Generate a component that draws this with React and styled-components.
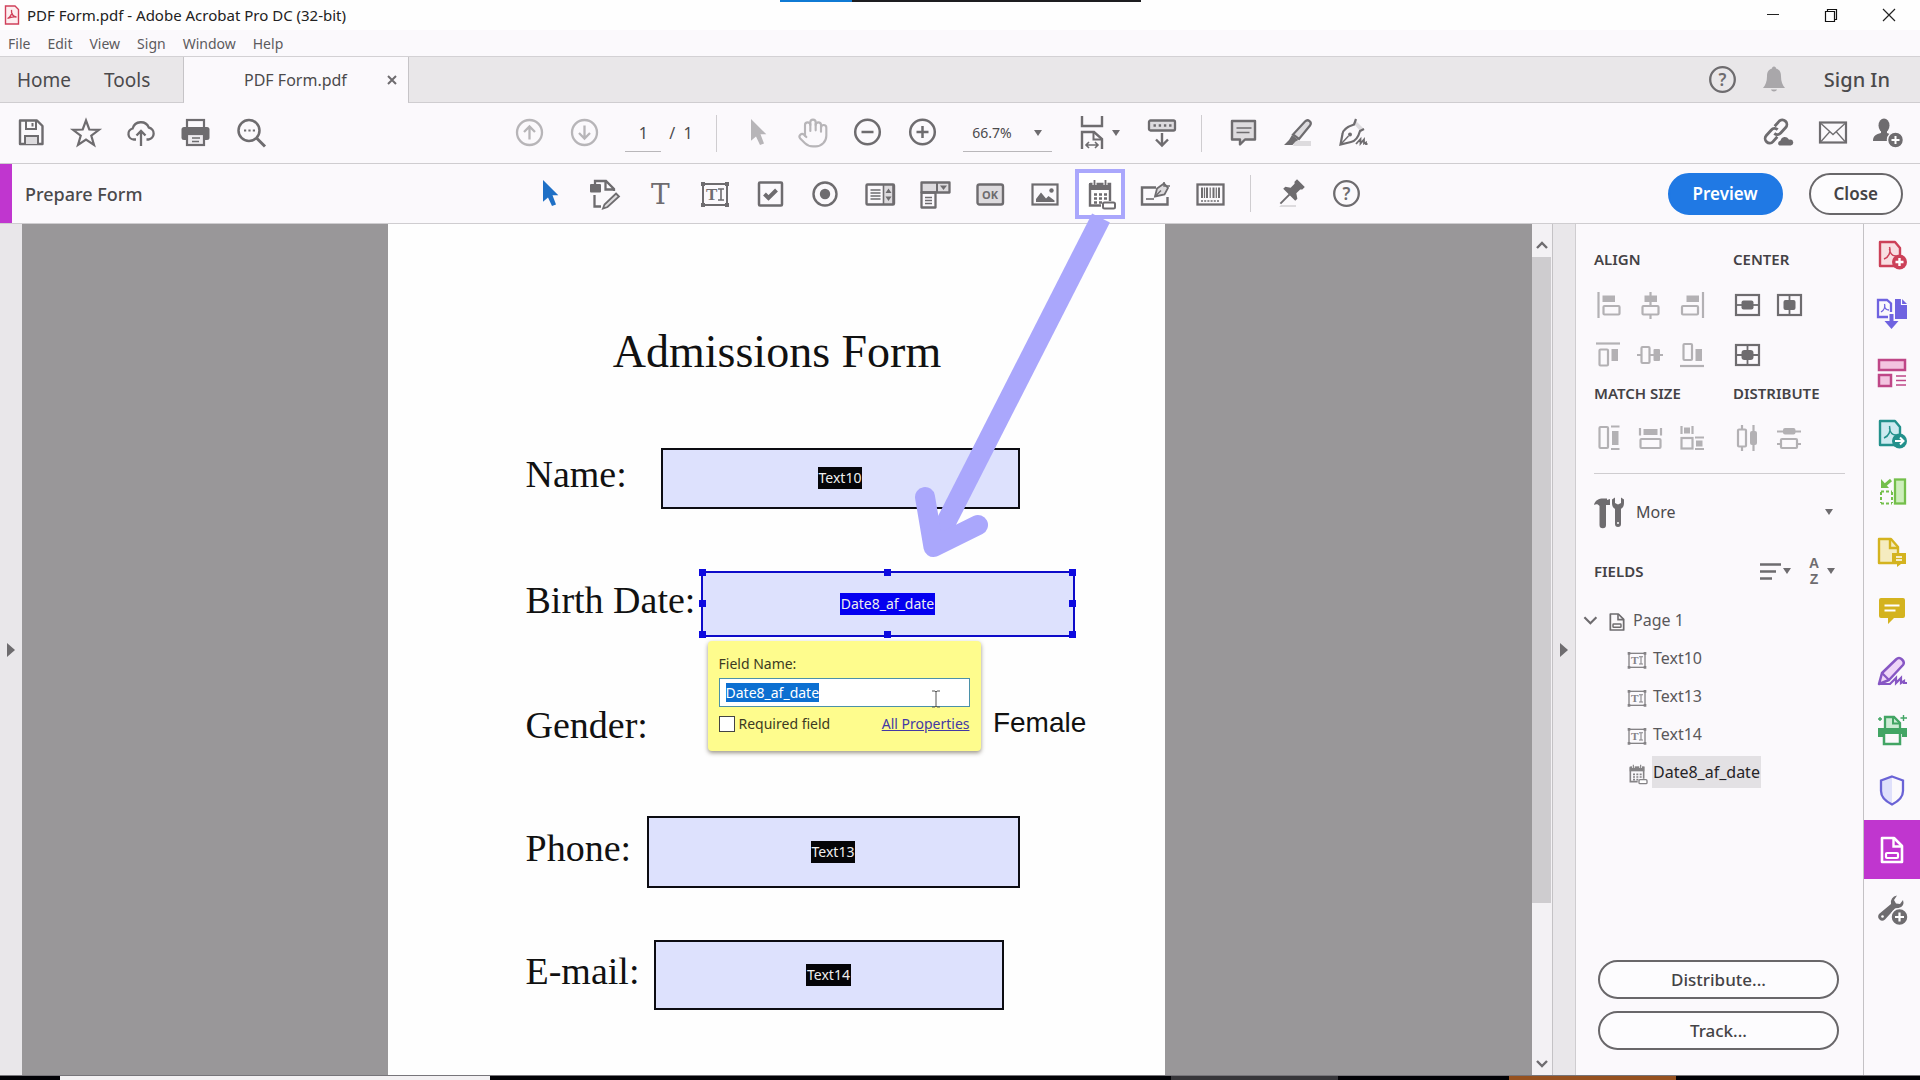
import React, { useEffect, useRef } from "react";
import styled, { createGlobalStyle, css } from "styled-components";
import { Hand } from "lucide-react";

const GlobalStyle = createGlobalStyle`
  * {
    box-sizing: border-box;
  }
  body {
    margin: 0;
    font-family: "Noto Sans", "Open Sans", sans-serif;
    font-size: 16px;
    color: #4b4a4c;
    background: #fbf9fc;
  }
  button, input, select {
    font-family: inherit;
    color: inherit;
    margin: 0;
  }
`;

const GREY = "#6e6c6f";
const LIGHT = "#dddbde";

/* ---------- icons ---------- */

const textFieldShape = (
  <>
    <rect x="3" y="5" width="24" height="21" strokeWidth="2" />
    <path
      d="M1 3h4v4H1zM25 3h4v4h-4zM1 24h4v4H1zM25 24h4v4h-4z"
      fill="currentColor"
      stroke="none"
    />
    <text
      x="6"
      y="21"
      fontSize="17"
      fontWeight="700"
      fontFamily="Liberation Serif, serif"
      fill="currentColor"
      stroke="none"
    >
      T
    </text>
    <path d="M18 10h6M21 10v11M18 21h6" strokeWidth="1.6" />
  </>
);

const calendarShape = (
  <>
    <path d="M5 5H25V22M5 5V26.5H16" strokeWidth="2.4" />
    <path d="M4 4H26V11H4Z" fill="currentColor" stroke="none" />
    <path d="M9.5 1V6M20.5 1V6" stroke="#fff" strokeWidth="4" />
    <path d="M9.5 1V6M20.5 1V6" strokeWidth="1.8" />
    <path d="M9 15.5h13M9 19.5h13M9 23.5h8" strokeWidth="2.6" strokeDasharray="3 2" />
    <rect x="18" y="23.5" width="12" height="6" rx="1.5" fill="#fff" strokeWidth="2" />
  </>
);

const formPageShape = (
  <>
    <path d="M5 3H17L25 11V27H5Z" strokeWidth="2.6" strokeLinejoin="round" />
    <path d="M16.5 3V11.5H25" strokeWidth="2.4" />
    <rect x="9" y="18" width="12" height="5" rx="1" strokeWidth="2.2" />
  </>
);

const acrobatPage = fill => (
  <>
    <path d="M3 3H18L23 9V27H3Z" fill={fill} strokeWidth="2.4" strokeLinejoin="round" />
    <path d="M7 20C12 18 14 13 12.5 8M12.5 10C13 14 15 17 19 17" strokeWidth="1.5" />
  </>
);

const icons = {
  save: (
    <>
      <path d="M4 2.5H21L26.5 8V26H4Z" strokeWidth="2.4" strokeLinejoin="round" />
      <path d="M10 3V11H20V3M16.5 5V8.5" strokeWidth="2" />
      <path d="M9 26V18H22V26" fill={LIGHT} strokeWidth="2" />
    </>
  ),
  star: (
    <path
      d="M15 2.5L18.3 11.5 28 11.8 20.3 17.7 23 27 15 21.6 7 27 9.7 17.7 2 11.8 11.7 11.5Z"
      strokeWidth="2.2"
    />
  ),
  upload: (
    <path
      d="M10 21.5H7.8A5.6 5.6 0 0 1 6.6 10.5 8.6 8.6 0 0 1 22.8 9.5 6.1 6.1 0 0 1 22.5 21.5H20.5M15 28V13M10.5 17.5L15 13l4.5 4.5"
      strokeWidth="2.3"
    />
  ),
  print: (
    <>
      <rect x="6" y="2" width="17" height="10" strokeWidth="2.2" />
      <rect x="0.5" y="9" width="28" height="13" rx="2.5" fill="currentColor" stroke="none" />
      <rect x="6" y="16" width="17" height="11" fill="#eeecef" strokeWidth="2.2" />
      <path d="M11 20h8M11 23.5h7" strokeWidth="1.3" />
    </>
  ),
  search: (
    <>
      <circle cx="13" cy="12.5" r="10.5" strokeWidth="2.5" />
      <path d="M20.5 20L29 28.5" strokeWidth="3" />
      <path d="M8 12.5h11" strokeWidth="2" strokeDasharray="2.2 2.2" />
    </>
  ),
  up: (
    <>
      <circle cx="15.5" cy="14.5" r="12.5" strokeWidth="2.3" />
      <path d="M15.5 21.5V8.5M10 14L15.5 8.5l5.5 5.5" strokeWidth="2.3" />
    </>
  ),
  down: (
    <>
      <circle cx="15.5" cy="14.5" r="12.5" strokeWidth="2.3" />
      <path d="M15.5 7.5V20.5M10 15L15.5 20.5l5.5-5.5" strokeWidth="2.3" />
    </>
  ),
  cursor: (
    <path
      d="M8 1L23.3 16.3H17.5L21 25.5 17 27 13 18.5 8 22.7Z"
      fill="currentColor"
      stroke="none"
    />
  ),
  minus: (
    <>
      <circle cx="14.5" cy="14" r="12.3" strokeWidth="2.5" />
      <path d="M8.5 14h12" strokeWidth="2.5" />
    </>
  ),
  plus: (
    <>
      <circle cx="14.5" cy="14" r="12.3" strokeWidth="2.5" />
      <path d="M8.5 14h12M14.5 8v12" strokeWidth="2.5" />
    </>
  ),
  fit: (
    <>
      <path d="M5 -2V8H25V-2M5 31V14H17L25 21V31" strokeWidth="2.4" />
      <path d="M16.5 14V21.5H25" strokeWidth="2" />
      <path d="M9 27H21M12 24l-3 3 3 3M18 24l3 3-3 3" strokeWidth="1.6" />
    </>
  ),
  scroll: (
    <>
      <rect x="3" y="2.5" width="26" height="10" rx="1.5" fill={LIGHT} strokeWidth="2.3" />
      <path d="M7.5 7.5h18" strokeWidth="2.4" strokeDasharray="2.4 2.8" />
      <path d="M16 15V27M10 21.5l6 6 6-6" strokeWidth="2.4" />
    </>
  ),
  comment: (
    <>
      <path
        d="M4 3H27V21.5H17L12 26.5V21.5H4Z"
        fill={LIGHT}
        strokeWidth="2.4"
        strokeLinejoin="round"
      />
      <path d="M8.5 10h15M8.5 14.5h13" strokeWidth="1.5" />
    </>
  ),
  highlight: (
    <>
      <path d="M12 23H28V28H10Z" fill={LIGHT} stroke="none" />
      <path
        d="M22 3.5C25 .5 29.5 4 27 7.5L16 21 10 16.5Z"
        fill={LIGHT}
        strokeWidth="2.2"
      />
      <path d="M9 17l6.5 5-3 1.5-3 3.5H1l5-5z" fill="currentColor" stroke="none" />
    </>
  ),
  sign: (
    <>
      <path d="M18 3L26 11 23 14 16 6Z" fill={LIGHT} stroke="none" />
      <path
        d="M18 1L16 6.5C10 8.5 5 11 4.5 16L2.5 26.5 13 24C18 23 20.5 18.5 22 13L26 11"
        strokeWidth="2.2"
      />
      <path d="M3 26L10.5 18" strokeWidth="1.5" />
      <circle cx="12" cy="16.5" r="2" fill="currentColor" stroke="none" />
      <path d="M18 26l4.5-5v4.5l3.5-4v4l2-1v1.5h1.5" strokeWidth="1.8" />
    </>
  ),
  link: (
    <>
      <g transform="translate(13 13.5) rotate(-48)" strokeWidth="2.8">
        <path d="M-3 4.5H-9.5A4.5 4.5 0 0 1 -9.5 -4.5H-2A4.5 4.5 0 0 1 2.5 0" />
        <path d="M3 -4.5H9.5A4.5 4.5 0 0 1 9.5 4.5H2A4.5 4.5 0 0 1 -2.5 0" />
      </g>
      <path
        d="M16 28.5a3.5 3.5 0 0 1 .5-6.5 5.5 5.5 0 0 1 10-1.5 4 4 0 0 1 1.5 8z"
        fill="currentColor"
        stroke="#fbf9fc"
      />
    </>
  ),
  mail: (
    <>
      <rect x="2" y="4.5" width="26" height="20" strokeWidth="2.2" />
      <path d="M3 5.5L15 16.5 27 5.5M3 23.5L11.5 14M27 23.5L18.5 14" strokeWidth="1.3" />
    </>
  ),
  person: (
    <>
      <ellipse cx="11" cy="7.5" rx="5.5" ry="7" fill="currentColor" stroke="none" />
      <path d="M8 12h6v3c4 1 6 3 6 8H0c0-5 3-7 8-8z" fill="currentColor" stroke="none" />
      <circle cx="22.5" cy="22" r="8" fill="currentColor" stroke="#fbf9fc" strokeWidth="1.5" />
      <path d="M18.5 22h8M22.5 18v8" stroke="#fff" strokeWidth="2" />
    </>
  ),
  editPage: (
    <>
      <rect x="0" y="5" width="11" height="8.5" rx="1" fill="currentColor" stroke="none" />
      <path d="M5 6V2H16L24 10V12M15.5 2V10.5H24M4.5 16V27.5H11" strokeWidth="2.3" />
      <path d="M26 14.5l3 3L17.5 28 13 29.5 14.5 25.5Z" fill={LIGHT} strokeWidth="1.8" />
    </>
  ),
  text: (
    <text x="6" y="25" fontSize="28" fontFamily="DejaVu Serif, serif" fill="currentColor" stroke="none">
      T
    </text>
  ),
  textField: textFieldShape,
  checkBox: (
    <>
      <rect x="4" y="3.5" width="23" height="23" rx="1" strokeWidth="2.5" />
      <path d="M9.5 15l4 4 8-8" strokeWidth="4" />
    </>
  ),
  radio: (
    <>
      <circle cx="15" cy="15" r="11.5" strokeWidth="2.4" />
      <circle cx="15" cy="15" r="5.2" fill="currentColor" stroke="none" />
    </>
  ),
  list: (
    <>
      <rect x="1.5" y="5.5" width="27.5" height="20" rx="1" strokeWidth="2.4" />
      <path d="M18.5 6H28V25H18.5Z" fill={LIGHT} strokeWidth="1.6" />
      <path d="M5.5 11h10M5.5 14h10M5.5 17h10M5.5 20h10" strokeWidth="1.4" />
      <path d="M20.5 14l3-4.5 3 4.5zM20.5 17.5l3 4.5 3-4.5z" fill="currentColor" stroke="none" />
    </>
  ),
  dropdown: (
    <>
      <path d="M1.5 3.5H29.5V13.5H1.5Z" fill={LIGHT} strokeWidth="2.3" strokeLinejoin="round" />
      <path d="M17 3.5v10" strokeWidth="2" />
      <path d="M20 6.5h7l-3.5 4.5z" fill="currentColor" stroke="none" />
      <path d="M1.5 13.5H15.5V28.5H1.5Z" strokeWidth="2.3" strokeLinejoin="round" />
      <path d="M5 18.5h7M5 21.5h7M5 24.5h7" strokeWidth="1.4" />
    </>
  ),
  ok: (
    <>
      <rect x="2.5" y="5.5" width="25.5" height="20" rx="2" fill={LIGHT} strokeWidth="2.4" />
      <text x="15" y="20" fontSize="11" fontWeight="700" textAnchor="middle" fill="currentColor" stroke="none">
        OK
      </text>
    </>
  ),
  image: (
    <>
      <rect x="2.5" y="5.5" width="25" height="20" strokeWidth="2.2" />
      <path d="M6 23V20l5-6.5 5 6 2.5-2.5 6 4.5V23Z" fill="currentColor" stroke="none" />
      <circle cx="21.5" cy="11.5" r="2.2" fill="currentColor" stroke="none" />
    </>
  ),
  date: calendarShape,
  signField: (
    <>
      <path d="M16 8.5H2V25.5H27.5V18" strokeWidth="2.4" />
      <path d="M6 20h8" strokeWidth="1.6" />
      <path d="M15 17.5L17 9.5 24 4.5 28 9 24.5 15.5Z" fill={LIGHT} strokeWidth="1.8" />
      <path d="M24 3v4h6M15 17.5l6-6" strokeWidth="1.5" />
    </>
  ),
  barcode: (
    <>
      <rect x="2.5" y="5.5" width="26" height="20" strokeWidth="2.3" />
      <path d="M7 8.5V19M12 8.5V19M18.5 8.5V19M24 8.5V19" strokeWidth="2" />
      <path d="M9.5 8.5V19M15.2 8.5V19M21.3 8.5V19" strokeWidth="1.2" />
      <path d="M6 22h19" strokeWidth="1.6" strokeDasharray="2 1.2" />
    </>
  ),
  pin: (
    <>
      <path d="M4 26h15v2H2z" fill={LIGHT} stroke="none" />
      <g transform="rotate(45 14 14)">
        <path
          d="M8.5 0H19.5V3.5L18 5V10.5L22.5 13.5V16.5H5.5V13.5L10 10.5V5L8.5 3.5Z"
          fill="currentColor"
          stroke="none"
        />
        <path d="M14 16V29" strokeWidth="2" />
      </g>
    </>
  ),
  help: (
    <>
      <circle cx="14.5" cy="14.5" r="12.3" strokeWidth="2.3" />
      <text x="14.5" y="20.5" fontSize="17" fontWeight="600" textAnchor="middle" fill="currentColor" stroke="none">
        ?
      </text>
    </>
  ),
  bell: (
    <path
      d="M15 1.5c1.5 0 2 1 2 2 4 1.2 5 4 5 8 0 5 1.5 8.5 4 11.5H4C6.5 20 8 16.5 8 11.5c0-4 1-6.8 5-8 0-1 .5-2 2-2zM12 24.5h6c-.5 2.5-5.5 2.5-6 0z"
      fill="currentColor"
      stroke="none"
    />
  ),
  tools: (
    <>
      <path
        d="M0 8C1 3 5 1.5 9 1.5H13V3L16 2V8H12V28A2 2 0 0 1 5.5 28V9C4 7 2 7 0 8Z"
        fill="currentColor"
        stroke="none"
      />
      <path
        d="M18 2.5V6c0 4 2 5 3 6v15a2.5 2.5 0 0 0 6 0V12c1-1 3-2 3-6V2.5L27 .5V6l-3 1.5L21 6V.5z"
        fill="currentColor"
        stroke="none"
      />
      <circle cx="24" cy="26" r="1" fill="#fff" stroke="none" />
    </>
  ),
  sort: <path d="M8 8.5H29M8 15.5H24M8 22.5H20" strokeWidth="2.6" />,
  az: (
    <g
      fill="currentColor"
      stroke="none"
      fontFamily="Liberation Sans, sans-serif"
      fontSize="14"
      fontWeight="700"
      textAnchor="middle"
    >
      <text x="18" y="12">A</text>
      <text x="18" y="28">Z</text>
    </g>
  ),
  chevron: <path d="M4 10.5L14 20.5 24 10.5" strokeWidth="3.6" />
};

// Alignment glyphs share a 28px box
const alignIcons = {
  left: (
    <>
      <path d="M4.5 1V27" />
      <rect x="8.5" y="4.5" width="12.5" height="6.5" fill="currentColor" stroke="none" />
      <rect x="9.5" y="15" width="16" height="8.5" rx="1" />
    </>
  ),
  middle: (
    <>
      <path d="M14.5 1V15M14.5 24V28" />
      <rect x="8.5" y="4.5" width="12.5" height="6.5" fill="currentColor" stroke="none" />
      <rect x="6.5" y="15" width="16" height="8.5" rx="1" />
    </>
  ),
  right: (
    <>
      <path d="M25 1V27" />
      <rect x="8.5" y="4.5" width="12.5" height="6.5" fill="currentColor" stroke="none" />
      <rect x="4" y="15" width="16" height="8.5" rx="1" />
    </>
  ),
  top: (
    <>
      <path d="M2 2.5H26" />
      <rect x="5.5" y="8.5" width="8.5" height="16" rx="1" />
      <rect x="17.5" y="8" width="6.5" height="12" fill="currentColor" stroke="none" />
    </>
  ),
  center: (
    <>
      <path d="M1 14H5M13 14H27" />
      <rect x="5.5" y="6" width="8" height="16" rx="1" />
      <rect x="17.5" y="8" width="6.5" height="12" rx="1" fill="currentColor" stroke="none" />
    </>
  ),
  bottom: (
    <>
      <path d="M2 25H26" />
      <rect x="5.5" y="3" width="8.5" height="16" rx="1" />
      <rect x="17.5" y="8" width="6.5" height="12" fill="currentColor" stroke="none" />
    </>
  ),
  boxH: (
    <>
      <rect x="3" y="4" width="23" height="20" />
      <rect x="8.5" y="9.5" width="12" height="9" rx="2" fill="currentColor" stroke="none" />
      <path d="M3 14h23" strokeWidth="1.8" />
    </>
  ),
  boxV: (
    <>
      <rect x="3" y="4" width="23" height="20" />
      <rect x="8.5" y="9" width="12" height="10" rx="2" fill="currentColor" stroke="none" />
      <path d="M14.5 4v20" strokeWidth="1.8" />
    </>
  ),
  boxBoth: (
    <>
      <rect x="3" y="4" width="23" height="20" />
      <rect x="8.5" y="9" width="12" height="10" rx="3" fill="currentColor" stroke="none" />
      <path d="M3 14h23M14.5 4v20" strokeWidth="1.8" />
    </>
  ),
  matchHeight: (
    <>
      <rect x="5.5" y="3" width="8.5" height="21" rx="1" />
      <path d="M17 2.5H25.5M17 25H25.5" />
      <rect x="18" y="7" width="6.5" height="14" fill="currentColor" stroke="none" />
    </>
  ),
  matchWidth: (
    <>
      <path d="M4 4V11.5M25 4V11.5" />
      <rect x="7.5" y="5" width="14" height="6" fill="currentColor" stroke="none" />
      <rect x="4.5" y="15" width="20" height="9" rx="1" />
    </>
  ),
  matchBoth: (
    <>
      <path d="M3.5 2V10M14.5 2V10M17 13.5H26M17 25H26" />
      <rect x="6" y="3.5" width="6" height="6" fill="currentColor" stroke="none" />
      <rect x="3.5" y="14" width="11" height="10.5" />
      <rect x="18" y="16.5" width="6.5" height="6" fill="currentColor" stroke="none" />
    </>
  ),
  distributeH: (
    <>
      <path d="M9 1V5M9 23V27M20.5 1V27" />
      <rect x="5" y="5.5" width="8" height="17" rx="1" />
      <rect x="17" y="7" width="7" height="14" rx="2" fill="currentColor" stroke="none" />
    </>
  ),
  distributeV: (
    <>
      <path d="M2 7.5H26M2 20H6M22 20H26" />
      <rect x="8" y="4" width="12.5" height="6.5" rx="2" fill="currentColor" stroke="none" />
      <rect x="6" y="15" width="16" height="9" rx="1" />
    </>
  )
};

const stripIcons = {
  create: {
    color: "#cc4158",
    shape: (
      <>
        {acrobatPage("#f8dfe2")}
        <circle cx="22.5" cy="23" r="7.5" fill="currentColor" stroke="none" />
        <path d="M18.5 23h8M22.5 19v8" stroke="#fff" strokeWidth="2.4" />
      </>
    )
  },
  export: {
    color: "#6f63e0",
    shape: (
      <>
        <path d="M18 1H25L30 6V21H18Z" fill="currentColor" stroke="none" />
        <path d="M24.5 1V6.5H30" stroke="#fff" strokeWidth="1.2" />
        <path d="M1 2H10L14 5.5V19H1Z" strokeWidth="2.3" />
        <path d="M4 14C7 12 8.5 9 7.5 6M7.5 8C8 11 10 12 12 12" strokeWidth="1.3" />
        <path d="M14.5 14V24" stroke="#fbf9fc" strokeWidth="7" />
        <path d="M12.5 16h4v7h5l-7 8-7-8h5z" fill="currentColor" stroke="none" />
      </>
    )
  },
  organize: {
    color: "#bf4787",
    shape: (
      <>
        <rect x="2" y="2" width="26" height="10" fill="#f3c4e0" strokeWidth="2.5" />
        <rect x="2" y="17" width="12" height="11" fill="#f3c4e0" strokeWidth="2.5" />
        <path d="M19 18h10M19 22.5h10M19 27h10" strokeWidth="1.5" />
      </>
    )
  },
  send: {
    color: "#23918c",
    shape: (
      <>
        {acrobatPage("#cdeaf0")}
        <circle cx="22.5" cy="23" r="7.5" fill="currentColor" stroke="none" />
        <path d="M18 23h8M23 19.5l3.5 3.5-3.5 3.5" stroke="#fff" strokeWidth="2" />
      </>
    )
  },
  combine: {
    color: "#74bf4b",
    shape: (
      <>
        <rect x="18" y="2.5" width="10" height="24" fill="#cdeebb" strokeWidth="2.3" />
        <path d="M4 14.5H15M4 26.5H15M4 15V26M15 15V26" strokeWidth="2" strokeDasharray="3 2" />
        <path d="M14 3L7 9" strokeWidth="3" />
        <path d="M4 2V11H12Z" fill="currentColor" stroke="none" />
      </>
    )
  },
  review: {
    color: "#d4b31f",
    shape: (
      <>
        <path d="M2 2H14L21 10V26H2Z" fill="#f5ecc0" strokeWidth="2.4" strokeLinejoin="round" />
        <path d="M13 2V11H21" strokeWidth="2.4" />
        <path d="M15 16H29V27H24L20 30V27H15Z" fill="currentColor" stroke="none" />
        <path d="M19 20h6M19 23h6" stroke="#fff" strokeWidth="1.3" />
      </>
    )
  },
  comment: {
    color: "#d4b31f",
    shape: (
      <>
        <path d="M4 2H26Q28 2 28 4V20Q28 22 26 22H17L11 28V22H4Q2 22 2 20V4Q2 2 4 2Z" fill="currentColor" stroke="none" />
        <path d="M7.5 9.5h15M7.5 14.5h11" stroke="#fff" strokeWidth="2" />
      </>
    )
  },
  fill: {
    color: "#8757c4",
    shape: (
      <>
        <path
          d="M19 3.5Q22 .5 25 3.5T26 9L12 24 2 28 5 17Z"
          fill="#efd6f8"
          strokeWidth="2.5"
          strokeLinejoin="round"
        />
        <path d="M5 17L12 24M2 28H13L19 22V27L24 22V27L27 25V27H30" strokeWidth="2.2" />
      </>
    )
  },
  scan: {
    color: "#42a564",
    shape: (
      <>
        <path d="M8 13V2H17L23 8V13" fill="#ccecd5" strokeWidth="2.3" />
        <path d="M16 2V8.5H23" strokeWidth="2" />
        <path d="M1 13H30V22H25V19H6V22H1Z" fill="currentColor" stroke="none" />
        <path d="M7 18.5V29H23V18.5" strokeWidth="2.5" />
        <path d="M26.5 0V6M23.5 3H30M3 2V6M1 4H5" strokeWidth="1.4" />
      </>
    )
  },
  protect: {
    color: "#6a63d6",
    shape: (
      <>
        <path d="M15 1.5L4 5.5V16Q4 24 15 29.5Z" fill="#dfe0fb" stroke="none" />
        <path d="M15 1.5L26 5.5V16Q26 24 15 29.5 4 24 4 16V5.5Z" strokeWidth="2.3" />
      </>
    )
  },
  form: { color: "#ffffff", shape: formPageShape },
  more: {
    color: GREY,
    shape: (
      <>
        <path
          d="M20 1.5L17 6l2 3.5 4 .5 3-4Q28 12 22 14L18 14.5 8 25.5Q5 28 2.5 25.5T2 20L14 10Q13 3 20 1.5Z"
          fill="currentColor"
          stroke="none"
        />
        <circle cx="5.5" cy="22.5" r="1.3" fill="#fff" stroke="none" />
        <circle cx="22.5" cy="23" r="8.5" fill="currentColor" stroke="#fbf9fc" strokeWidth="1.5" />
        <path d="M18 23h9M22.5 18.5v9" stroke="#fff" strokeWidth="2.2" />
      </>
    )
  }
};

const Svg = styled.svg`
  display: block;
  flex: none;
  overflow: visible;
  color: ${({ $color }) => $color};
`;

const Icon = ({ shape, box = 30, size = box, color = GREY }) => (
  <Svg
    width={size}
    height={size}
    viewBox={`0 0 ${box} ${box}`}
    fill="none"
    stroke="currentColor"
    strokeWidth="2.2"
    $color={color}
    aria-hidden="true"
  >
    {shape}
  </Svg>
);

const Caret = () => (
  <Svg width="10" height="6" viewBox="0 0 10 6" $color={GREY} aria-hidden="true">
    <path d="M1 0h8L5 6z" fill="currentColor" />
  </Svg>
);

/* ---------- window chrome ---------- */

const Shell = styled.div`
  display: flex;
  flex-direction: column;
  min-height: 100vh;
  position: relative;
`;

const plainButton = css`
  border: 0;
  padding: 0;
  background: none;
  font-size: 16px;
`;

const ShareBar = styled.div`
  position: absolute;
  top: 0;
  left: 780px;
  width: 361px;
  height: 2px;
  background: linear-gradient(to right, #0f7ad4 20%, #1d1d20 20%);
`;

const TitleBar = styled.header`
  display: flex;
  align-items: center;
  gap: 7px;
  height: 30px;
  padding: 0 23px 0 4px;
  background: #fefefe;
  font-size: 15px;
  line-height: 20px;
  color: #222;
`;

const WindowButtons = styled.div`
  display: flex;
  gap: 42px;
  margin-left: auto;

  button {
    ${plainButton}
  }
`;

const MenuBar = styled.nav`
  display: flex;
  align-items: center;
  gap: 17px;
  height: 27px;
  padding: 0 8px;
  border-bottom: 1px solid #d3d1d4;
  background: #fbf9fc;

  button {
    ${plainButton}
    font-size: 14px;
    color: #5d5b5e;
  }
`;

const TabBar = styled.div`
  display: flex;
  height: 46px;
  background: #e9e7e9;
`;

const TabGroup = styled.div`
  display: flex;
  align-items: center;
  gap: 33px;
  width: 184px;
  padding-left: 17px;
  border-right: 1px solid #c6c4c7;
  border-bottom: 1px solid #cfcdd0;

  button {
    ${plainButton}
    font-size: 19px;
  }
`;

const DocTab = styled.div`
  display: flex;
  align-items: center;
  justify-content: space-between;
  width: 224px;
  padding: 0 11px 0 60px;
  background: #fbf9fc;

  button {
    ${plainButton}
  }
`;

const Account = styled.div`
  flex: 1;
  display: flex;
  align-items: center;
  justify-content: flex-end;
  padding-right: 30px;
  border-left: 1px solid #c6c4c7;
  border-bottom: 1px solid #cfcdd0;

  button {
    ${plainButton}
    margin-left: 21px;
  }
`;

const SignIn = styled.button`
  && {
    margin-left: 35px;
    font-size: 20px;
    font-weight: 500;
  }
`;

const Toolbar = styled.div`
  display: grid;
  grid-template-columns: ${({ $columns }) => $columns};
  align-items: center;
  height: ${({ $height }) => $height}px;
  border-bottom: 1px solid #cfcdd0;
  background: #fbf9fc;
`;

const ToolGroup = styled.div`
  display: flex;
  align-items: center;
  height: 100%;
  padding: ${({ $pad = "0" }) => $pad};
  justify-content: ${({ $end }) => ($end ? "flex-end" : "flex-start")};
`;

const ToolButton = styled.button`
  ${plainButton}
  display: flex;
  align-items: center;
  justify-content: center;
  width: 55px;
  height: 42px;
`;

const Divider = styled.span`
  width: 1px;
  height: 37px;
  margin: 0 13px;
  background: #cfcdd0;
`;

const PageInput = styled.input`
  width: 36px;
  height: 37px;
  margin-left: 14px;
  padding: 0;
  border: 0;
  border-bottom: 1px solid #b9b7ba;
  background: none;
  font-size: 16px;
  text-align: center;
`;

const PageCount = styled.span`
  width: 42px;
  padding-left: 8px;
  white-space: pre;
`;

const ZoomBox = styled.div`
  display: flex;
  align-items: center;
  width: 89px;
  height: 37px;
  margin: 0 13px;
  padding-right: 9px;
  border-bottom: 1px solid #b9b7ba;

  select {
    flex: 1;
    min-width: 0;
    padding: 0 0 0 9px;
    border: 0;
    appearance: none;
    background: none;
    font-size: 14px;
  }
`;

const FitButton = styled(ToolButton)`
  width: 68px;
  gap: 4px;
`;

const ModeTitle = styled.h1`
  display: flex;
  align-items: center;
  height: 100%;
  margin: 0;
  padding-left: 13px;
  border-left: 12px solid #c036cf;
  font-size: 18px;
  font-weight: 500;
`;

const Pill = styled.button`
  height: ${({ $height = 42 }) => $height}px;
  padding: 0 23px;
  border: 2px solid ${({ $primary }) => ($primary ? "#2079e4" : "#69676a")};
  border-radius: 21px;
  background: ${({ $primary }) => ($primary ? "#2079e4" : "#fdfcfe")};
  color: ${({ $primary }) => ($primary ? "#fff" : "#454346")};
  font-size: 17px;
  line-height: 22px;
  font-weight: ${({ $weight = 600 }) => $weight};
`;

const Actions = styled(ToolGroup)`
  gap: 26px;
`;

/* Framed tool with its pointer arrow */
const Callout = styled.div`
  position: relative;
  display: flex;
  justify-content: center;
  width: 50px;
  height: 50px;
  margin: 0 2px 0 3px;
  border: 4px solid #aaa7fc;
  background: #fff;
`;

const Arrow = styled.svg`
  position: absolute;
  left: -163px;
  top: -4px;
  z-index: 5;
  overflow: visible;
  pointer-events: none;
`;

/* ---------- document ---------- */

const Main = styled.main`
  flex: 1;
  display: flex;
`;

const Rail = styled.button`
  display: flex;
  align-items: center;
  justify-content: center;
  width: ${({ $width }) => $width}px;
  padding: 0;
  border: 0;
  border-right: ${({ $edge }) => ($edge ? "1px solid #cfcdd0" : "0")};
  background: #e9e7ea;
`;

const Canvas = styled.div`
  flex: 1;
  display: flex;
  justify-content: center;
  padding-right: 2px;
  background: #999799;
`;

const Sheet = styled.section`
  width: 777px;
  padding: 100px 0 24px 138px;
  background: #fefefe;
  font-family: "Liberation Serif", serif;
  color: #111;
`;

const FormTitle = styled.h2`
  margin: 0 136px 35px 0;
  font-size: 46px;
  line-height: 56px;
  font-weight: 400;
  text-align: center;
`;

const FormRow = styled.div`
  display: flex;
  align-items: center;
  height: ${({ $tall }) => ($tall ? 126 : 123)}px;

  > label,
  > span {
    padding-bottom: 8px;
    font-size: 38px;
    line-height: 44px;
    white-space: nowrap;
  }
`;

const FieldLabel = styled.label`
  width: ${({ $width }) => $width}px;
`;

const FieldBox = styled.div`
  position: relative;
  display: grid;
  place-items: center;
  width: ${({ $width }) => $width}px;
  height: ${({ $height }) => $height}px;
  border: 2px solid ${({ $selected }) => ($selected ? "#0d0ac9" : "#0c0c12")};
  background: #dde1fd;

  > input {
    grid-area: 1 / 1;
    width: 100%;
    height: 100%;
    border: 0;
    background: none;
  }
`;

const FieldTag = styled.span`
  grid-area: 1 / 1;
  padding: 0 1px;
  background: ${({ $selected }) => ($selected ? "#0500f0" : "#050508")};
  color: #eee;
  font: 14px/22px "Noto Sans", sans-serif;
`;

const Handle = styled.i`
  position: absolute;
  left: ${({ $x }) => $x};
  top: ${({ $y }) => $y};
  width: 7px;
  height: 7px;
  margin: -4px;
  background: #0d0ae0;
`;

const Popup = styled.div`
  position: absolute;
  left: 5px;
  top: 68px;
  z-index: 2;
  width: 273px;
  height: 110px;
  padding: 13px 11px;
  border-radius: 4px;
  background: #fefc8d;
  box-shadow: 0 2px 4px rgba(90, 80, 60, 0.6);
  font: 14px/20px "Noto Sans", sans-serif;
  color: #3c3a22;

  > label {
    display: block;
  }
`;

const NameInput = styled.input`
  display: block;
  width: 100%;
  height: 29px;
  margin-top: 4px;
  padding: 0 6px;
  border: 1px solid #4b91a8;
  outline: 0;
  background: #fff;
  font-size: 14px;

  &::selection {
    background: #0c6fd1;
    color: #fff;
  }
`;

const PopupRow = styled.div`
  display: flex;
  align-items: center;
  justify-content: space-between;
  margin-top: 7px;

  label {
    display: flex;
    align-items: center;
    gap: 4px;
  }

  input {
    appearance: none;
    width: 16px;
    height: 16px;
    border: 1px solid #444;
    background: #fff;
  }

  a {
    color: #4339a5;
  }
`;

const IBeam = styled.svg`
  position: absolute;
  left: 223px;
  top: 49px;
`;

const Option = styled.p`
  margin: 0 0 0 345px;
  padding-bottom: 12px;
  font: 28px/32px "Liberation Sans", sans-serif;
`;

const Scrollbar = styled.div`
  display: flex;
  flex-direction: column;
  align-items: stretch;
  width: 21px;
  padding-top: 10px;
  border-right: 1px solid #c4c2c5;
  background: #f3f1f4;

  button {
    ${plainButton}
    display: flex;
    align-items: center;
    justify-content: center;
    height: 23px;
  }

  button:last-child {
    margin-top: auto;
  }
`;

const Thumb = styled.div`
  height: 646px;
  margin-right: 1px;
  background: #cecccf;
`;

/* ---------- side panel ---------- */

const Panel = styled.aside`
  display: flex;
  flex-direction: column;
  width: 288px;
  padding: 23px 18px 25px;
  border-right: 1px solid #c4c2c5;
  background: #fbf9fc;
`;

const PanelGrid = styled.div`
  display: grid;
  grid-template-columns: 139px 1fr;
  padding-bottom: 21px;
  border-bottom: 1px solid #cfcdd0;
`;

const PanelHeading = styled.h3`
  margin: 0;
  font-size: 15px;
  line-height: 24px;
  font-weight: 600;
  color: #444245;
`;

const AlignGrid = styled.div`
  display: grid;
  grid-template-columns: repeat(${({ $columns }) => $columns}, 28px);
  grid-auto-rows: 28px;
  gap: 22px 14px;
  align-content: start;
  padding: ${({ $tight }) => ($tight ? "19px 0 0" : "20px 0 12px")};

  button {
    ${plainButton}
  }
`;

const MoreButton = styled.button`
  ${plainButton}
  display: flex;
  align-items: center;
  gap: 12px;
  margin-top: 20px;
  padding-right: 11px;
  height: 36px;

  svg:last-child {
    margin-left: auto;
  }
`;

const FieldsHead = styled.div`
  display: flex;
  align-items: center;
  gap: 4px;
  margin-top: 24px;
  padding-right: 9px;
  height: 34px;

  h3 {
    margin-right: auto;
  }

  button {
    ${plainButton}
    display: flex;
    align-items: center;
  }
`;

const Tree = styled.ul`
  flex: 1;
  margin: 13px 0 0;
  padding: 0;
  list-style: none;

  ul {
    margin: 0;
    padding: 0 0 0 33px;
    list-style: none;
  }
`;

const TreeItem = styled.button`
  ${plainButton}
  display: flex;
  align-items: center;
  gap: 5px;
  height: 38px;
  margin-left: ${({ $root }) => ($root ? "-12px" : "0")};
  color: ${({ $selected }) => ($selected ? "#262427" : "#5a585b")};

  > svg:nth-last-child(2) {
    margin-left: ${({ $root }) => ($root ? "2px" : "0")};
    margin-top: 4px;
  }

  span {
    padding: 0 1px;
    line-height: 32px;
    background: ${({ $selected }) => ($selected ? "#e3e1e4" : "none")};
  }
`;

const PanelActions = styled.div`
  display: grid;
  gap: 12px;
  padding: 0 6px 0 4px;
`;

const ToolStrip = styled.nav`
  display: flex;
  flex-direction: column;
  width: 56px;
  padding-bottom: 136px;
  background: #fbf9fc;
`;

const StripButton = styled.button`
  ${plainButton}
  flex: 1;
  display: flex;
  align-items: center;
  justify-content: center;
  background: ${({ $active }) => ($active ? "#c036cf" : "none")};
`;

const Taskbar = styled.footer`
  display: flex;
  height: 5px;
  border-top: 1px solid #77757a;
  background: #020206;
`;

const Segment = styled.span`
  width: ${({ $width }) => $width}%;
  background: ${({ $color }) => $color};
`;

/* ---------- data ---------- */

const menus = ["File", "Edit", "View", "Sign", "Window", "Help"];
const fileTools = ["save", "star", "upload", "print", "search"];
const formTools = [
  "editPage",
  "text",
  "textField",
  "checkBox",
  "radio",
  "list",
  "dropdown",
  "ok",
  "image"
];
const treeFields = [
  { name: "Text10", icon: textFieldShape },
  { name: "Text13", icon: textFieldShape },
  { name: "Text14", icon: textFieldShape },
  { name: "Date8_af_date", icon: calendarShape, selected: true }
];
const handles = [
  ["0%", "0%"],
  ["50%", "0%"],
  ["100%", "0%"],
  ["0%", "50%"],
  ["100%", "50%"],
  ["0%", "100%"],
  ["50%", "100%"],
  ["100%", "100%"]
];
const segments = [
  [3.1, "#020206"],
  [22.4, "#f3f1f3"],
  [35.5, "#020206"],
  [8.7, "#37363a"],
  [8.9, "#020206"],
  [8.7, "#96511f"]
];

const Tool = ({ name, color }) => (
  <ToolButton aria-label={name}>
    <Icon shape={icons[name]} color={color} />
  </ToolButton>
);

const AlignButtons = ({ names, color = "#b3b1b4", columns = 3, tight }) => (
  <AlignGrid $columns={columns} $tight={tight}>
    {names.map(name => (
      <button key={name} aria-label={name}>
        <Icon shape={alignIcons[name]} box={28} color={color} />
      </button>
    ))}
  </AlignGrid>
);

const FormField = ({ label, labelWidth, name, width, height, tall, selected, children }) => (
  <FormRow $tall={tall}>
    <FieldLabel htmlFor={name} $width={labelWidth}>
      {label}
    </FieldLabel>
    <FieldBox $width={width} $height={height} $selected={selected}>
      <input id={name} type="text" readOnly />
      <FieldTag $selected={selected}>{name}</FieldTag>
      {children}
    </FieldBox>
  </FormRow>
);

const FieldPopup = () => {
  const nameInput = useRef(null);

  useEffect(() => {
    nameInput.current.focus();
    nameInput.current.select();
  }, []);

  return (
    <Popup>
      <label htmlFor="field-name">Field Name:</label>
      <NameInput id="field-name" ref={nameInput} defaultValue="Date8_af_date" />
      <IBeam width="10" height="18" viewBox="0 0 10 18" fill="none" stroke="#555">
        <path d="M1 1h3l1 1 1-1h3M5 2v14M1 17h3l1-1 1 1h3" />
      </IBeam>
      <PopupRow>
        <label>
          <input type="checkbox" />
          Required field
        </label>
        <a href="#properties">All Properties</a>
      </PopupRow>
    </Popup>
  );
};

const App = () => (
  <Shell>
    <GlobalStyle />
    <ShareBar />
    <TitleBar>
      <Svg width="16" height="20" viewBox="0 0 16 20" fill="#fdeef0" stroke="currentColor" $color="#d0405a">
        <path d="M1.5 1H11l3.5 3.5V19h-13z" strokeWidth="1.4" />
        <path d="M3.5 13.5C6 12.5 8.5 9 7.5 5c-.5 4 2 7 5 7-3-.5-6 0-9 1.5z" strokeWidth="1.3" />
      </Svg>
      PDF Form.pdf - Adobe Acrobat Pro DC (32-bit)
      <WindowButtons>
        <button aria-label="Minimize">
          <Svg width="16" height="16" viewBox="0 0 16 16" fill="none" stroke="#222">
            <path d="M2 7.5h12" />
          </Svg>
        </button>
        <button aria-label="Restore">
          <Svg width="16" height="16" viewBox="0 0 16 16" fill="none" stroke="#111" strokeWidth="1.2">
            <path d="M2.5 4.5h9v10h-9zM4.5 4.5v-2h9v10h-2" />
          </Svg>
        </button>
        <button aria-label="Close window">
          <Svg width="16" height="16" viewBox="0 0 16 16" fill="none" stroke="#222" strokeWidth="1.2">
            <path d="M2 2l12 12M14 2L2 14" />
          </Svg>
        </button>
      </WindowButtons>
    </TitleBar>
    <MenuBar>
      {menus.map(menu => (
        <button key={menu}>{menu}</button>
      ))}
    </MenuBar>
    <TabBar>
      <TabGroup>
        <button>Home</button>
        <button>Tools</button>
      </TabGroup>
      <DocTab>
        PDF Form.pdf
        <button aria-label="Close tab">
          <Svg width="10" height="10" viewBox="0 0 10 10" stroke="currentColor" strokeWidth="2" $color={GREY}>
            <path d="M1 1l8 8M9 1L1 9" />
          </Svg>
        </button>
      </DocTab>
      <Account>
        <button aria-label="Help">
          <Icon shape={icons.help} />
        </button>
        <button aria-label="Notifications">
          <Icon shape={icons.bell} color="#a9a7aa" />
        </button>
        <SignIn>Sign In</SignIn>
      </Account>
    </TabBar>

    <Toolbar $columns="13fr auto 14fr" $height={61}>
      <ToolGroup $pad="0 0 0 3px">
        {fileTools.map(name => (
          <Tool key={name} name={name} />
        ))}
      </ToolGroup>
      <ToolGroup>
        <Tool name="up" color="#b7b5b8" />
        <Tool name="down" color="#b7b5b8" />
        <PageInput aria-label="Page number" defaultValue="1" />
        <PageCount>/  1</PageCount>
        <Divider />
        <Tool name="cursor" color="#b7b5b8" />
        <ToolButton aria-label="Pan">
          <Hand size={32} strokeWidth={1.6} color="#b7b5b8" />
        </ToolButton>
        <Tool name="minus" />
        <Tool name="plus" />
        <ZoomBox>
          <select aria-label="Zoom level" defaultValue="66.7%">
            <option>66.7%</option>
            <option>100%</option>
          </select>
          <Caret />
        </ZoomBox>
        <FitButton aria-label="Fit width">
          <Icon shape={icons.fit} />
          <Caret />
        </FitButton>
        <Tool name="scroll" />
        <Divider />
        <Tool name="comment" />
        <Tool name="highlight" />
        <Tool name="sign" />
      </ToolGroup>
      <ToolGroup $end $pad="0 5px 0 0">
        <Tool name="link" />
        <Tool name="mail" />
        <Tool name="person" />
      </ToolGroup>
    </Toolbar>

    <Toolbar $columns="22fr auto 23fr" $height={60}>
      <ModeTitle>Prepare Form</ModeTitle>
      <ToolGroup>
        <Tool name="cursor" color="#1f70c6" />
        {formTools.map(name => (
          <Tool key={name} name={name} />
        ))}
        <Callout>
          <ToolButton aria-label="date">
            <Icon shape={icons.date} />
          </ToolButton>
          <Arrow width="210" height="400" viewBox="0 0 210 400" fill="none" stroke="#aaa7fc" strokeWidth="20">
            <path d="M185 49L17.5 378" />
            <path d="M9 328L17.5 378 62 356" strokeLinecap="round" strokeLinejoin="round" />
          </Arrow>
        </Callout>
        <Tool name="signField" />
        <Tool name="barcode" />
        <Divider />
        <Tool name="pin" />
        <Tool name="help" />
      </ToolGroup>
      <Actions $end $pad="0 17px 0 0">
        <Pill $primary>Preview</Pill>
        <Pill>Close</Pill>
      </Actions>
    </Toolbar>

    <Main>
      <Rail $width={22} aria-label="Show navigation pane">
        <Svg width="8" height="14" viewBox="0 0 8 14" $color={GREY}>
          <path d="M0 0l8 7-8 7z" fill="currentColor" />
        </Svg>
      </Rail>
      <Canvas>
        <Sheet>
          <FormTitle>Admissions Form</FormTitle>
          <FormField label="Name:" labelWidth={135} name="Text10" width={359} height={61} tall />
          <FormField
            label="Birth Date:"
            labelWidth={175}
            name="Date8_af_date"
            width={374}
            height={66}
            tall
            selected
          >
            {handles.map(([x, y]) => (
              <Handle key={x + y} $x={x} $y={y} />
            ))}
            <FieldPopup />
          </FormField>
          <FormRow>
            <span>Gender:</span>
            <Option>Female</Option>
          </FormRow>
          <FormField label="Phone:" labelWidth={121} name="Text13" width={373} height={72} />
          <FormField label="E-mail:" labelWidth={128} name="Text14" width={350} height={70} />
        </Sheet>
      </Canvas>
      <Scrollbar>
        <button aria-label="Scroll up">
          <Svg width="10" height="7" viewBox="0 0 10 7" fill="none" stroke={GREY} strokeWidth="2.4">
            <path d="M0 6l5-5 5 5" />
          </Svg>
        </button>
        <Thumb />
        <button aria-label="Scroll down">
          <Svg width="10" height="7" viewBox="0 0 10 7" fill="none" stroke={GREY} strokeWidth="2.4">
            <path d="M0 1l5 5 5-5" />
          </Svg>
        </button>
      </Scrollbar>
      <Rail $width={23} $edge aria-label="Hide tools pane">
        <Svg width="8" height="14" viewBox="0 0 8 14" $color={GREY}>
          <path d="M0 0l8 7-8 7z" fill="currentColor" />
        </Svg>
      </Rail>
      <Panel>
        <PanelGrid>
          <PanelHeading>ALIGN</PanelHeading>
          <PanelHeading>CENTER</PanelHeading>
          <AlignButtons names={["left", "middle", "right", "top", "center", "bottom"]} />
          <AlignButtons names={["boxH", "boxV", "boxBoth"]} columns={2} color={GREY} />
          <PanelHeading>MATCH SIZE</PanelHeading>
          <PanelHeading>DISTRIBUTE</PanelHeading>
          <AlignButtons tight names={["matchHeight", "matchWidth", "matchBoth"]} />
          <AlignButtons tight names={["distributeH", "distributeV"]} columns={2} />
        </PanelGrid>
        <MoreButton>
          <Icon shape={icons.tools} />
          More
          <Caret />
        </MoreButton>
        <FieldsHead>
          <PanelHeading>FIELDS</PanelHeading>
          <button aria-label="Sort order">
            <Icon shape={icons.sort} />
            <Caret />
          </button>
          <button aria-label="Sort by name">
            <Icon shape={icons.az} />
            <Caret />
          </button>
        </FieldsHead>
        <Tree>
          <li>
            <TreeItem $root>
              <Icon shape={icons.chevron} size={18} />
              <Icon shape={formPageShape} size={20} />
              <span>Page 1</span>
            </TreeItem>
            <ul>
              {treeFields.map(({ name, icon, selected }) => (
                <li key={name}>
                  <TreeItem $selected={selected}>
                    <Icon shape={icon} size={20} color="#858386" />
                    <span>{name}</span>
                  </TreeItem>
                </li>
              ))}
            </ul>
          </li>
        </Tree>
        <PanelActions>
          <Pill $height={39} $weight={500}>
            Distribute...
          </Pill>
          <Pill $height={39} $weight={500}>
            Track...
          </Pill>
        </PanelActions>
      </Panel>
      <ToolStrip>
        {Object.entries(stripIcons).map(([name, { color, shape }]) => (
          <StripButton key={name} aria-label={name} $active={name === "form"}>
            <Icon shape={shape} color={color} />
          </StripButton>
        ))}
      </ToolStrip>
    </Main>
    <Taskbar>
      {segments.map(([width, color], i) => (
        <Segment key={i} $width={width} $color={color} />
      ))}
    </Taskbar>
  </Shell>
);

export default App;
